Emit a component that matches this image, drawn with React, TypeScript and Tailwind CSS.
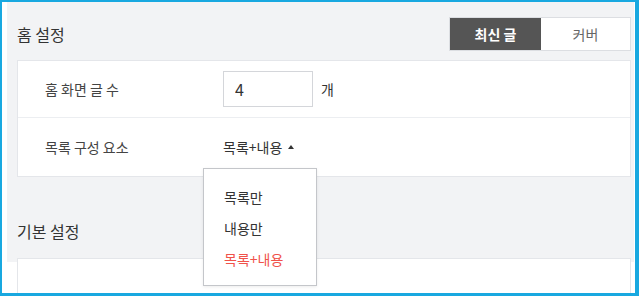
const font = { fontFamily: '"Noto Sans CJK KR", "Noto Sans", sans-serif' };

export default function App() {
    return (
        <div className="w-[639px] h-[296px] overflow-hidden bg-white border-l-[2px] border-t-[2px] border-r-[4px] border-b-[3px] border-[#18a8e0]" style={font}>
            <div className="relative h-full flex flex-col">
                {/* home settings */}
                <div className="ml-[5px] mr-[1px] bg-[#f2f3f5] pl-[10px] pr-[3px] pt-[15px]">
                    <div className="flex items-center justify-between">
                        <h2 className="text-[16px] text-[#333] leading-[20px]">홈 설정</h2>
                        <div className="flex w-[182px] h-[34px] border border-[#dcdee2] bg-white text-[14px]">
                            <button className="w-[91px] bg-[#555] text-white font-bold">최신 글</button>
                            <button className="flex-1 text-[#666]">커버</button>
                        </div>
                    </div>

                    <div className="mt-[9px] bg-white border border-[#e4e6ea] text-[14px] text-[#444]">
                        <div className="flex items-center h-[57px] border-b border-[#eceef1]">
                            <div className="w-[205px] pl-[27px]">홈 화면 글 수</div>
                            <input
                                type="text"
                                value="4"
                                readOnly
                                className="w-[90px] h-[36px] border border-[#d4d6da] px-[11px] text-[16px] text-[#333] outline-none"
                            />
                            <span className="ml-[8px] text-[#333]">개</span>
                        </div>
                        <div className="flex items-center h-[58px]">
                            <div className="w-[205px] pl-[27px]">목록 구성 요소</div>
                            <span className="text-[#333]">목록+내용</span>
                            <span className="ml-[6px] w-0 h-0 border-l-[3px] border-r-[3px] border-b-[4px] border-l-transparent border-r-transparent border-b-[#333]"></span>
                        </div>
                    </div>

                    <h2 className="mt-[44px] text-[16px] text-[#333] leading-[20px]">기본 설정</h2>
                    <div className="mt-[17px] h-[4px] bg-white border-t border-l border-r border-[#e4e6ea]"></div>
                </div>
                {/* rest of the basic settings card, below the grey area */}
                <div className="flex-1 ml-[15px] mr-[4px] bg-white border-l border-r border-[#e4e6ea]"></div>

                {/* dropdown */}
                <div className="absolute left-[201px] top-[166px] w-[114px] h-[118px] bg-white border border-[#c4c6ca] shadow-[0_1px_3px_rgba(0,0,0,0.08)] pl-[20px] pt-[18px] text-[14px] flex flex-col gap-[10px] leading-[21px]">
                    <div className="text-[#333]">목록만</div>
                    <div className="text-[#333]">내용만</div>
                    <div className="text-[#f0524a]">목록+내용</div>
                </div>
            </div>
        </div>
    );
}
